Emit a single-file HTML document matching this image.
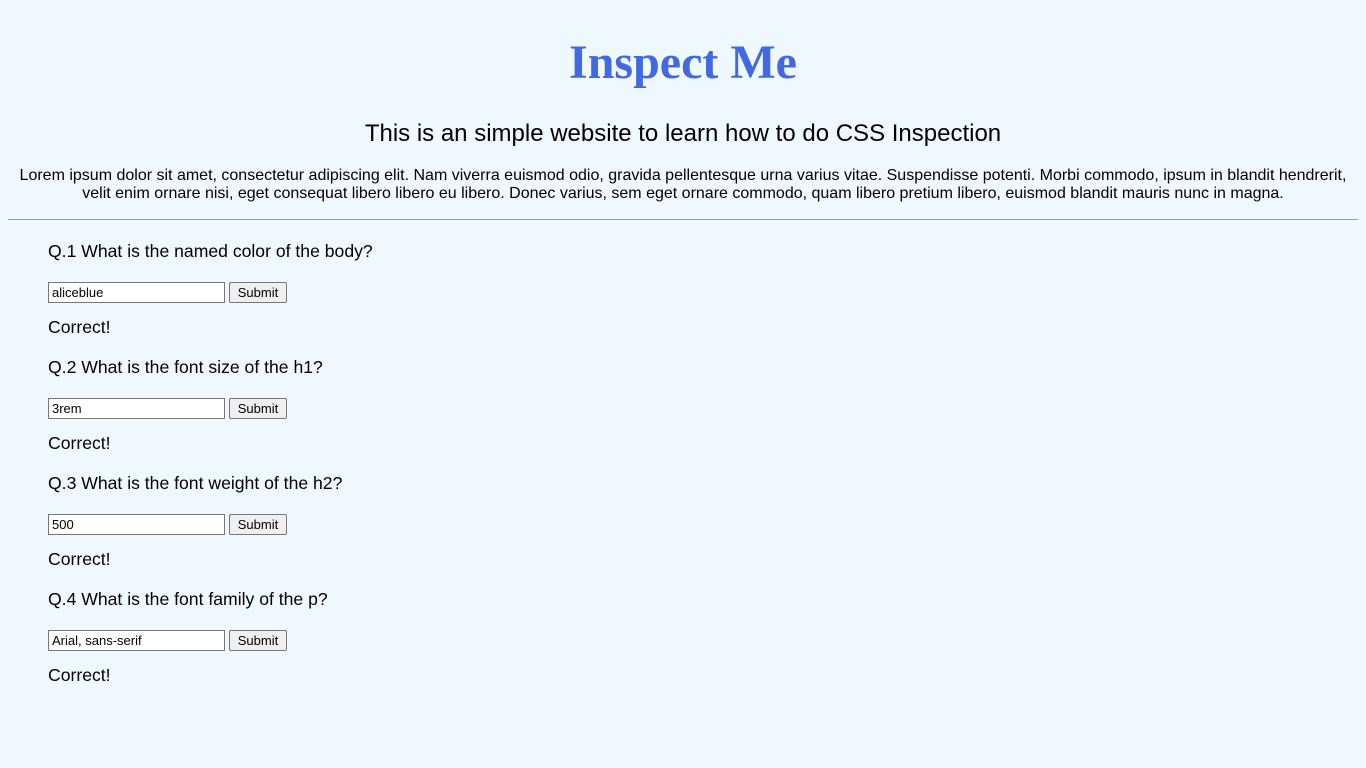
<!DOCTYPE html>
<html><head><style>
body{margin:0;background:aliceblue;font-family:"Liberation Sans",Arial,sans-serif;color:#000;width:1366px;height:768px;overflow:hidden;position:relative}
.a{position:absolute;white-space:nowrap}
h1{position:absolute;top:34px;left:0;width:1366px;margin:0;text-align:center;font-family:"Liberation Serif",serif;font-size:48px;font-weight:bold;color:royalblue;line-height:58px}
h2{position:absolute;top:119px;left:0;width:1366px;margin:0;text-align:center;font-size:24px;font-weight:normal;line-height:30px}
p.l{position:absolute;top:167px;left:8px;width:1350px;margin:0;text-align:center;font-size:16px;line-height:18px}
hr{position:absolute;top:219px;left:8px;width:1350px;margin:0;border:0;border-top:1px solid #999;height:0}
.q{font-size:17.6px;line-height:20px}
.in{position:absolute;border:1px solid #767676;background:#fff;font-size:13px;line-height:19px;padding-left:3px;box-sizing:border-box;width:177px;height:21px}
.bt{position:absolute;width:58px;height:21px;border:1px solid #767676;background:#efefef;border-radius:2px;font-size:13px;line-height:19px;text-align:center;box-sizing:border-box}
</style></head><body>
<h1>Inspect Me</h1>
<h2>This is an simple website to learn how to do CSS Inspection</h2>
<p class="l">Lorem ipsum dolor sit amet, consectetur adipiscing elit. Nam viverra euismod odio, gravida pellentesque urna varius vitae. Suspendisse potenti. Morbi commodo, ipsum in blandit hendrerit, velit enim ornare nisi, eget consequat libero libero eu libero. Donec varius, sem eget ornare commodo, quam libero pretium libero, euismod blandit mauris nunc in magna.</p>
<hr>
<div class="a q" style="left:48px;top:241px">Q.1 What is the named color of the body?</div>
<div class="in" style="left:48px;top:282px">aliceblue</div><div class="bt" style="left:229px;top:282px">Submit</div>
<div class="a q" style="left:48px;top:317px">Correct!</div>
<div class="a q" style="left:48px;top:357px">Q.2 What is the font size of the h1?</div>
<div class="in" style="left:48px;top:398px">3rem</div><div class="bt" style="left:229px;top:398px">Submit</div>
<div class="a q" style="left:48px;top:433px">Correct!</div>
<div class="a q" style="left:48px;top:473px">Q.3 What is the font weight of the h2?</div>
<div class="in" style="left:48px;top:514px">500</div><div class="bt" style="left:229px;top:514px">Submit</div>
<div class="a q" style="left:48px;top:549px">Correct!</div>
<div class="a q" style="left:48px;top:589px">Q.4 What is the font family of the p?</div>
<div class="in" style="left:48px;top:630px">Arial, sans-serif</div><div class="bt" style="left:229px;top:630px">Submit</div>
<div class="a q" style="left:48px;top:665px">Correct!</div>
</body></html>
